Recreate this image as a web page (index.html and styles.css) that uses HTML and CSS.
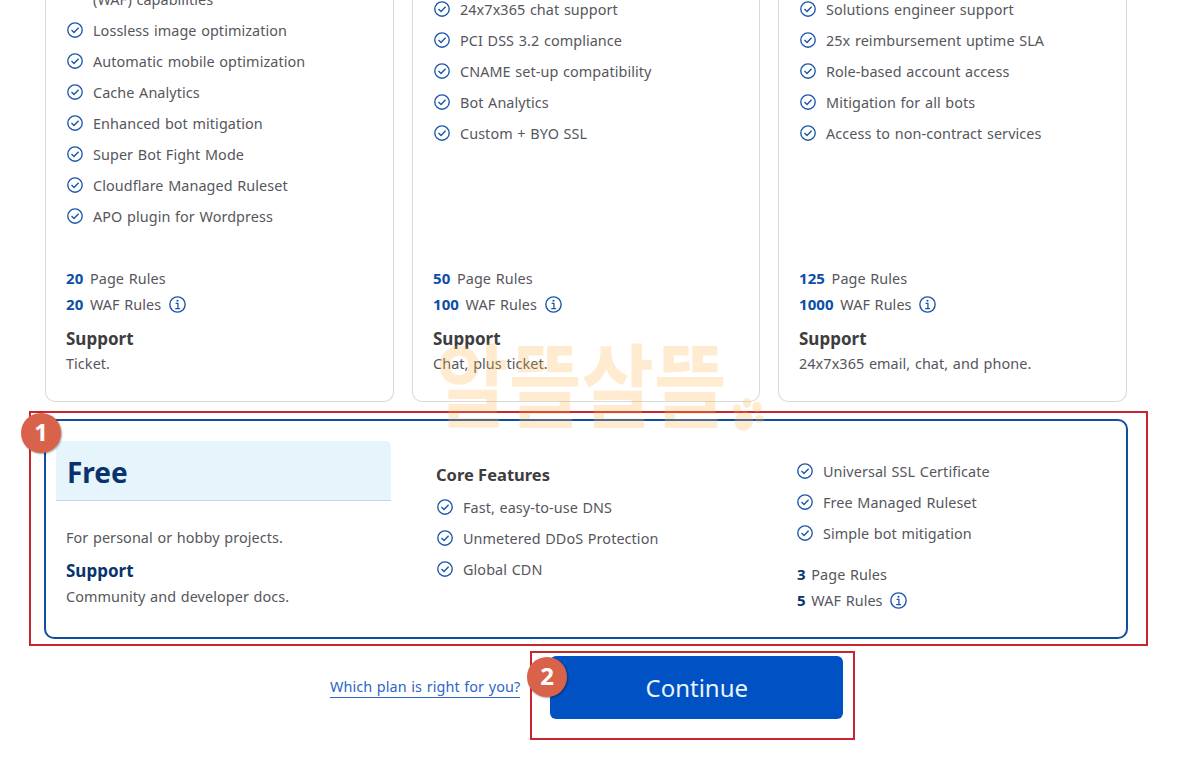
FILE: index.html
```html
<!DOCTYPE html>
<html lang="en">
<head>
<meta charset="utf-8">
<title>Plans</title>
<link rel="stylesheet" href="styles.css">
</head>
<body>
<svg class="defs" width="0" height="0" aria-hidden="true">
  <symbol id="chk" viewBox="0 0 16 16">
    <circle cx="8" cy="8" r="7.2" fill="none" stroke="currentColor" stroke-width="1.35"/>
    <path d="M4.5 8.1l2.5 2.5 4.6-4.8" fill="none" stroke="currentColor" stroke-width="1.4"/>
  </symbol>
  <symbol id="inf" viewBox="0 0 16 16">
    <circle cx="8" cy="8" r="7.2" fill="none" stroke="currentColor" stroke-width="1.3"/>
    <circle cx="8" cy="4.5" r="1" fill="currentColor"/>
    <path d="M6.2 7h2.2v4.6M5.8 11.8h4.6" fill="none" stroke="currentColor" stroke-width="1.2"/>
  </symbol>
</svg>
<main class="page">
  <section class="plans">
    <article class="plan">
      <ul class="feats">
        <li class="cont">(WAF) capabilities</li>
        <li><svg class="ic"><use href="#chk"/></svg>Lossless image optimization</li>
        <li><svg class="ic"><use href="#chk"/></svg>Automatic mobile optimization</li>
        <li><svg class="ic"><use href="#chk"/></svg>Cache Analytics</li>
        <li><svg class="ic"><use href="#chk"/></svg>Enhanced bot mitigation</li>
        <li><svg class="ic"><use href="#chk"/></svg>Super Bot Fight Mode</li>
        <li><svg class="ic"><use href="#chk"/></svg>Cloudflare Managed Ruleset</li>
        <li><svg class="ic"><use href="#chk"/></svg>APO plugin for Wordpress</li>
      </ul>
      <div class="rules">
        <p><b>20</b> Page Rules</p>
        <p><b>20</b> WAF Rules <svg class="inf"><use href="#inf"/></svg></p>
      </div>
      <h4>Support</h4>
      <p class="sup">Ticket.</p>
    </article>
    <article class="plan">
      <ul class="feats">
        <li><svg class="ic"><use href="#chk"/></svg>24x7x365 chat support</li>
        <li><svg class="ic"><use href="#chk"/></svg>PCI DSS 3.2 compliance</li>
        <li><svg class="ic"><use href="#chk"/></svg>CNAME set-up compatibility</li>
        <li><svg class="ic"><use href="#chk"/></svg>Bot Analytics</li>
        <li><svg class="ic"><use href="#chk"/></svg>Custom + BYO SSL</li>
      </ul>
      <div class="rules">
        <p><b>50</b> Page Rules</p>
        <p><b>100</b> WAF Rules <svg class="inf"><use href="#inf"/></svg></p>
      </div>
      <h4>Support</h4>
      <p class="sup">Chat, plus ticket.</p>
    </article>
    <article class="plan">
      <ul class="feats">
        <li><svg class="ic"><use href="#chk"/></svg>Solutions engineer support</li>
        <li><svg class="ic"><use href="#chk"/></svg>25x reimbursement uptime SLA</li>
        <li><svg class="ic"><use href="#chk"/></svg>Role-based account access</li>
        <li><svg class="ic"><use href="#chk"/></svg>Mitigation for all bots</li>
        <li><svg class="ic"><use href="#chk"/></svg>Access to non-contract services</li>
      </ul>
      <div class="rules">
        <p><b>125</b> Page Rules</p>
        <p><b>1000</b> WAF Rules <svg class="inf"><use href="#inf"/></svg></p>
      </div>
      <h4>Support</h4>
      <p class="sup">24x7x365 email, chat, and phone.</p>
    </article>
  </section>

  <section class="free">
    <div class="free-a">
      <h2>Free</h2>
      <p class="desc">For personal or hobby projects.</p>
      <h4 class="navy">Support</h4>
      <p class="sup">Community and developer docs.</p>
    </div>
    <div class="free-b">
      <h3>Core Features</h3>
      <ul class="feats">
        <li><svg class="ic"><use href="#chk"/></svg>Fast, easy-to-use DNS</li>
        <li><svg class="ic"><use href="#chk"/></svg>Unmetered DDoS Protection</li>
        <li><svg class="ic"><use href="#chk"/></svg>Global CDN</li>
      </ul>
    </div>
    <div class="free-c">
      <ul class="feats">
        <li><svg class="ic"><use href="#chk"/></svg>Universal SSL Certificate</li>
        <li><svg class="ic"><use href="#chk"/></svg>Free Managed Ruleset</li>
        <li><svg class="ic"><use href="#chk"/></svg>Simple bot mitigation</li>
      </ul>
      <div class="rules navy-nums">
        <p><b>3</b> Page Rules</p>
        <p><b>5</b> WAF Rules <svg class="inf"><use href="#inf"/></svg></p>
      </div>
    </div>
  </section>

  <div class="actions">
    <a class="link" href="#">Which plan is right for you?</a>
    <button class="cta" type="button">Continue</button>
  </div>
</main>

<div class="mark mark-1"></div>
<div class="mark mark-2"></div>
<div class="badge badge-1">1</div>
<div class="badge badge-2">2</div>
<div class="wm">
  <span class="wm-text">알뜰살뜰</span>
  <svg class="paw" viewBox="0 0 32 34" aria-hidden="true">
    <ellipse cx="12" cy="23" rx="9" ry="10" transform="rotate(35 12 23)"/>
    <ellipse cx="5" cy="11" rx="4" ry="5"/>
    <ellipse cx="15" cy="5" rx="4" ry="5"/>
    <ellipse cx="25" cy="9" rx="4.5" ry="5.5"/>
    <ellipse cx="27.500" cy="21" rx="4.500" ry="4"/>
  </svg>
</div>
</body>
</html>
```
FILE: styles.css
```css
* { box-sizing: border-box; }
html, body { margin: 0; height: 100%; overflow: hidden; background: #fff; }
body {
  font-family: "Noto Sans", "Noto Sans CJK KR", sans-serif;
  font-size: 14.4px;
  letter-spacing: .08px;
  word-spacing: .8px;
  color: #56565c;
  position: relative;
}
.defs { position: absolute; }
.page { width: 1204px; padding-left: 44px; }
ul { list-style: none; margin: 0; padding: 0; }
p, h2, h3, h4 { margin: 0; }

.plans {
  display: flex;
  gap: 18px;
  margin-top: -30px;
  margin-left: 1px;
  height: 432px;
}
.plan {
  width: 349px;
  border: 1px solid #d9d9d9;
  border-top: 0;
  border-radius: 0 0 10px 10px;
  padding: 0 20px;
  display: flex;
  flex-direction: column;
}
.plan:nth-child(2) { width: 348px; }
.feats li {
  display: flex;
  align-items: center;
  height: 31px;
  white-space: nowrap;
}
.feats .cont { padding-left: 27px; }
.plan .feats { height: 295px; padding-top: 24px; }
.plan:first-child .feats { padding-top: 14px; }
.ic { width: 16px; height: 16px; color: #1a56a8; margin: 0 10px 0 1px; flex: none; position: relative; top: -1px; }
.inf { width: 17px; height: 17px; color: #1a56a8; margin-left: 3px; vertical-align: -3px; }
.rules p { line-height: 26px; height: 26px; white-space: nowrap; }
.rules b { color: #0d4ea6; font-size: 15px; font-weight: 700; margin-right: 2px; }
h4 {
  font-size: 17px;
  font-weight: 700;
  color: #3d3d40;
  line-height: 24px;
  margin-top: 10px;
  letter-spacing: 0;
}
.sup { line-height: 25px; white-space: nowrap; }

.free {
  width: 1084px;
  height: 220px;
  margin-top: 17px;
  border: 2px solid #0f4fa3;
  border-radius: 10px;
  display: flex;
}
.free-a { width: 345px; padding: 20px 0 0 10px; flex: none; }
.free-a h2 {
  height: 60px;
  background: #e6f4fb;
  border-bottom: 1px solid #bcd7ee;
  border-radius: 5px 5px 0 0;
  color: #08336f;
  font-size: 28px;
  font-weight: 700;
  line-height: 62px;
  padding-left: 11px;
  letter-spacing: 0;
}
.desc { margin: 24px 0 0 10px; line-height: 25px; }
.free-a h4 { margin: 9px 0 0 10px; color: #08336f; }
.free-a .sup { margin: 1px 0 0 10px; }
.free-b { width: 364px; padding: 41px 0 0 45px; flex: none; }
.free-b h3 { font-size: 16.5px; font-weight: 700; color: #3d3d40; line-height: 26px; margin-bottom: 4px; letter-spacing: 0; word-spacing: 0; }
.free-c { flex: 1; padding: 35px 0 0 41px; }
.free-c .rules { margin-top: 12px; margin-left: 1px; }
.navy-nums b { color: #08336f; margin-right: 1px; }

.actions {
  display: flex;
  align-items: center;
  margin-top: 17px;
  padding-left: 286px;
  gap: 30px;
}
.link {
  color: #2c66c8;
  text-decoration: none;
  border-bottom: 1px solid #2c66c8;
  line-height: 20px;
  white-space: nowrap;
}
.cta {
  width: 293px;
  height: 63px;
  background: #0051c3;
  color: #e9f4fb;
  border: 0;
  border-radius: 6px;
  font: 400 24px "Noto Sans", sans-serif;
}

.mark { position: absolute; border: 2px solid #c9252f; }
.mark-1 { left: 29px; top: 411px; width: 1119px; height: 235px; }
.mark-2 { left: 530px; top: 651px; width: 325px; height: 89px; }
.badge {
  position: absolute;
  width: 40px;
  height: 40px;
  border-radius: 50%;
  background: #d9634a;
  color: #fff;
  font: 700 24px/38px "Noto Sans", sans-serif;
  letter-spacing: 0;
  text-align: center;
  box-shadow: 1px 1px 2px rgba(0,0,0,.35);
}
.badge-1 { left: 21px; top: 413px; }
.badge-2 { left: 527px; top: 657px; }
.wm {
  position: absolute;
  left: 436px;
  top: 326px;
  color: #ffb84d;
  opacity: .26;
  pointer-events: none;
}
.wm-text {
  display: block;
  font: 700 79px/96px "Noto Sans CJK KR", sans-serif;
  letter-spacing: 0;
  word-spacing: 0;
  white-space: nowrap;
  transform: scaleY(1.15);
  transform-origin: top left;
}
.paw {
  position: absolute;
  left: 296px;
  top: 72px;
  width: 32px;
  height: 34px;
  fill: currentColor;
}
```
